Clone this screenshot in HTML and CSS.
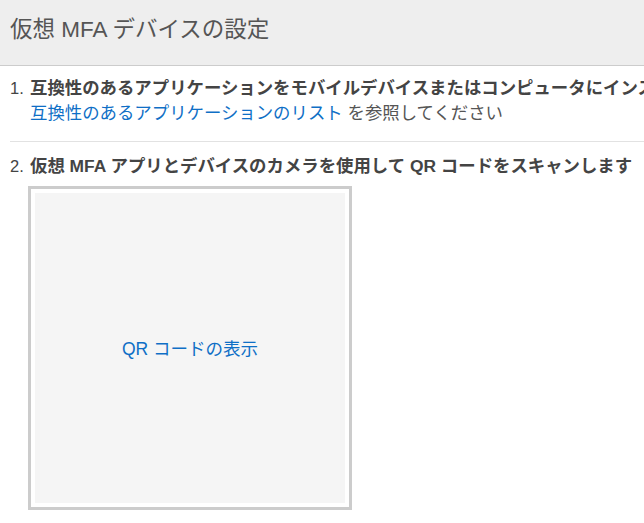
FILE: index.html
```html
<!DOCTYPE html>
<html lang="ja">
<head>
<meta charset="utf-8">
<link rel="stylesheet" href="styles.css">
</head>
<body>
<div class="header"><h1 class="title">仮想 MFA デバイスの設定</h1></div>
<div class="content">
  <div class="step step-first">
    <span class="num">1.</span>
    <div class="body">
      <div class="strong">互換性のあるアプリケーションをモバイルデバイスまたはコンピュータにインストールしてください</div>
      <div class="normal"><a class="link" href="#">互換性のあるアプリケーションのリスト</a> を参照してください</div>
    </div>
  </div>
  <div class="sep"></div>
  <div class="step">
    <span class="num">2.</span>
    <div class="body">
      <div class="strong">仮想 MFA アプリとデバイスのカメラを使用して QR コードをスキャンします</div>
    </div>
  </div>
  <div class="qr">
    <div class="qr-inner"><a class="link" href="#">QR コードの表示</a></div>
  </div>
</div>
</body>
</html>
```
FILE: styles.css
```css
html, body { margin: 0; padding: 0; background: #fff; overflow: hidden; }
body {
  font-family: "Liberation Sans", "Noto Sans CJK JP", sans-serif;
  color: #444;
  width: 644px;
}
.header {
  background: #eeeeee;
  height: 66px;
  border-bottom: 1px solid #cccccc;
  box-sizing: border-box;
  padding: 16px 0 0 10px;
}
.title {
  margin: 0;
  font-size: 22.5px;
  font-weight: normal;
  line-height: 28px;
  color: #555;
}
.content { padding-left: 10px; }
.step { display: flex; white-space: nowrap; font-size: 17.4px; line-height: 25px; }
.step-first { margin-top: 10px; }
.num { width: 20px; flex: none; color: #444; font-size: 16.5px; }
.strong { font-weight: bold; color: #444; }
.normal { color: #555; }
.link { color: #0f6fc6; text-decoration: none; }
.sep { height: 1px; background: #e2e2e2; margin: 15px 0 12px 0; }
.qr {
  margin: 7px 0 0 18px;
  width: 310px;
  height: 310px;
  border: 3px solid #cccccc;
  padding: 4px;
  background: #fff;
}
.qr-inner {
  width: 100%;
  height: 100%;
  background: #f5f5f5;
  display: flex;
  align-items: center;
  justify-content: center;
  font-size: 17.5px;
  padding-bottom: 1px;
  box-sizing: border-box;
}
```
